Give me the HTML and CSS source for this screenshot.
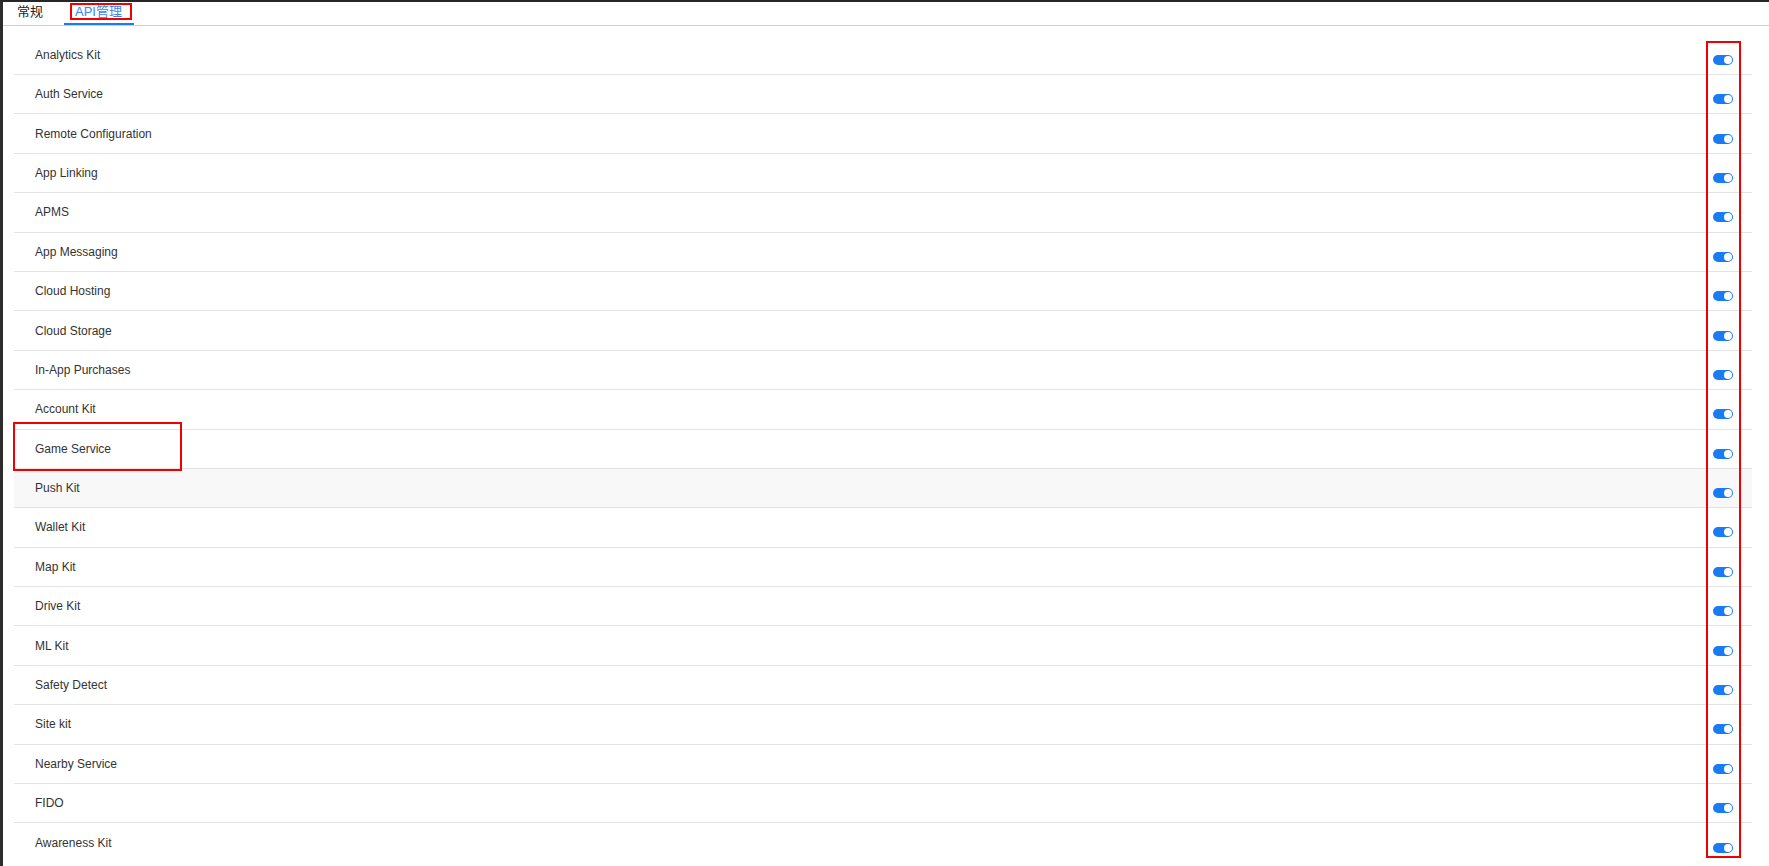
FILE: index.html
```html
<!DOCTYPE html>
<html lang="zh">
<head>
<meta charset="utf-8">
<title>API管理</title>
<link rel="stylesheet" href="styles.css">
</head>
<body>
<div class="frame">
  <div class="tabs">
    <div class="tab">常规</div>
    <div class="tab active">API管理</div>
  </div>
  <div class="list">
    <div class="row"><span class="name">Analytics Kit</span><span class="toggle"></span></div>
    <div class="row"><span class="name">Auth Service</span><span class="toggle"></span></div>
    <div class="row"><span class="name">Remote Configuration</span><span class="toggle"></span></div>
    <div class="row"><span class="name">App Linking</span><span class="toggle"></span></div>
    <div class="row"><span class="name">APMS</span><span class="toggle"></span></div>
    <div class="row"><span class="name">App Messaging</span><span class="toggle"></span></div>
    <div class="row"><span class="name">Cloud Hosting</span><span class="toggle"></span></div>
    <div class="row"><span class="name">Cloud Storage</span><span class="toggle"></span></div>
    <div class="row"><span class="name">In-App Purchases</span><span class="toggle"></span></div>
    <div class="row"><span class="name">Account Kit</span><span class="toggle"></span></div>
    <div class="row"><span class="name">Game Service</span><span class="toggle"></span></div>
    <div class="row hover"><span class="name">Push Kit</span><span class="toggle"></span></div>
    <div class="row"><span class="name">Wallet Kit</span><span class="toggle"></span></div>
    <div class="row"><span class="name">Map Kit</span><span class="toggle"></span></div>
    <div class="row"><span class="name">Drive Kit</span><span class="toggle"></span></div>
    <div class="row"><span class="name">ML Kit</span><span class="toggle"></span></div>
    <div class="row"><span class="name">Safety Detect</span><span class="toggle"></span></div>
    <div class="row"><span class="name">Site kit</span><span class="toggle"></span></div>
    <div class="row"><span class="name">Nearby Service</span><span class="toggle"></span></div>
    <div class="row"><span class="name">FIDO</span><span class="toggle"></span></div>
    <div class="row"><span class="name">Awareness Kit</span><span class="toggle"></span></div>
  </div>
  <div class="mark mark-tab"></div>
  <div class="mark mark-row"></div>
  <div class="mark mark-col"></div>
</div>
</body>
</html>
```

FILE: styles.css
```css
html, body {
  margin: 0;
  padding: 0;
  background: #ffffff;
}

body {
  font-family: "Liberation Sans", Arial, "Noto Sans CJK SC", sans-serif;
  color: #333333;
  overflow: hidden;
}

.frame {
  position: relative;
  box-sizing: border-box;
  height: 866px;
  border-top: 2px solid #262626;
  border-left: 3px solid #2c2c2c;
}

.tabs {
  display: flex;
  gap: 9px;
  height: 23px;
  padding-left: 2px;
  border-bottom: 1px solid #cfcfcf;
}

.tab {
  box-sizing: border-box;
  height: 23px;
  padding: 3px 12px 0;
  font-size: 13px;
  line-height: 14px;
  color: #222222;
  font-family: "Liberation Sans", Arial, "Noto Sans CJK SC", sans-serif;
}

.tab.active {
  padding: 3px 12px 0 11px;
  color: #3a86f0;
  border-bottom: 2px solid #1a7cf5;
}

.list {
  margin: 9.6px 17px 0 11px;
}

.row {
  box-sizing: border-box;
  height: 39.4px;
  display: flex;
  align-items: center;
  justify-content: space-between;
  padding: 0 19px 0 21px;
  border-bottom: 1px solid #e3e3e3;
  font-size: 12px;
}

.row:last-child {
  border-bottom: none;
}

.row.hover {
  background: #f8f8f8;
}

.name {
  color: #333333;
}

.toggle {
  position: relative;
  width: 20px;
  height: 10px;
  margin-top: 10px;
  border-radius: 5px;
  background: #1a7cf5;
}

.toggle::after {
  content: "";
  position: absolute;
  top: 1px;
  right: 1px;
  width: 8px;
  height: 8px;
  border-radius: 50%;
  background: #ffffff;
}

.mark {
  position: absolute;
  box-sizing: border-box;
  border: 2px solid #f00000;
  pointer-events: none;
}

.mark-tab {
  left: 67px;
  top: 1px;
  width: 62px;
  height: 17px;
}

.mark-row {
  left: 10px;
  top: 420px;
  width: 169px;
  height: 49px;
}

.mark-col {
  left: 1703px;
  top: 39px;
  width: 35px;
  height: 817px;
}
```
